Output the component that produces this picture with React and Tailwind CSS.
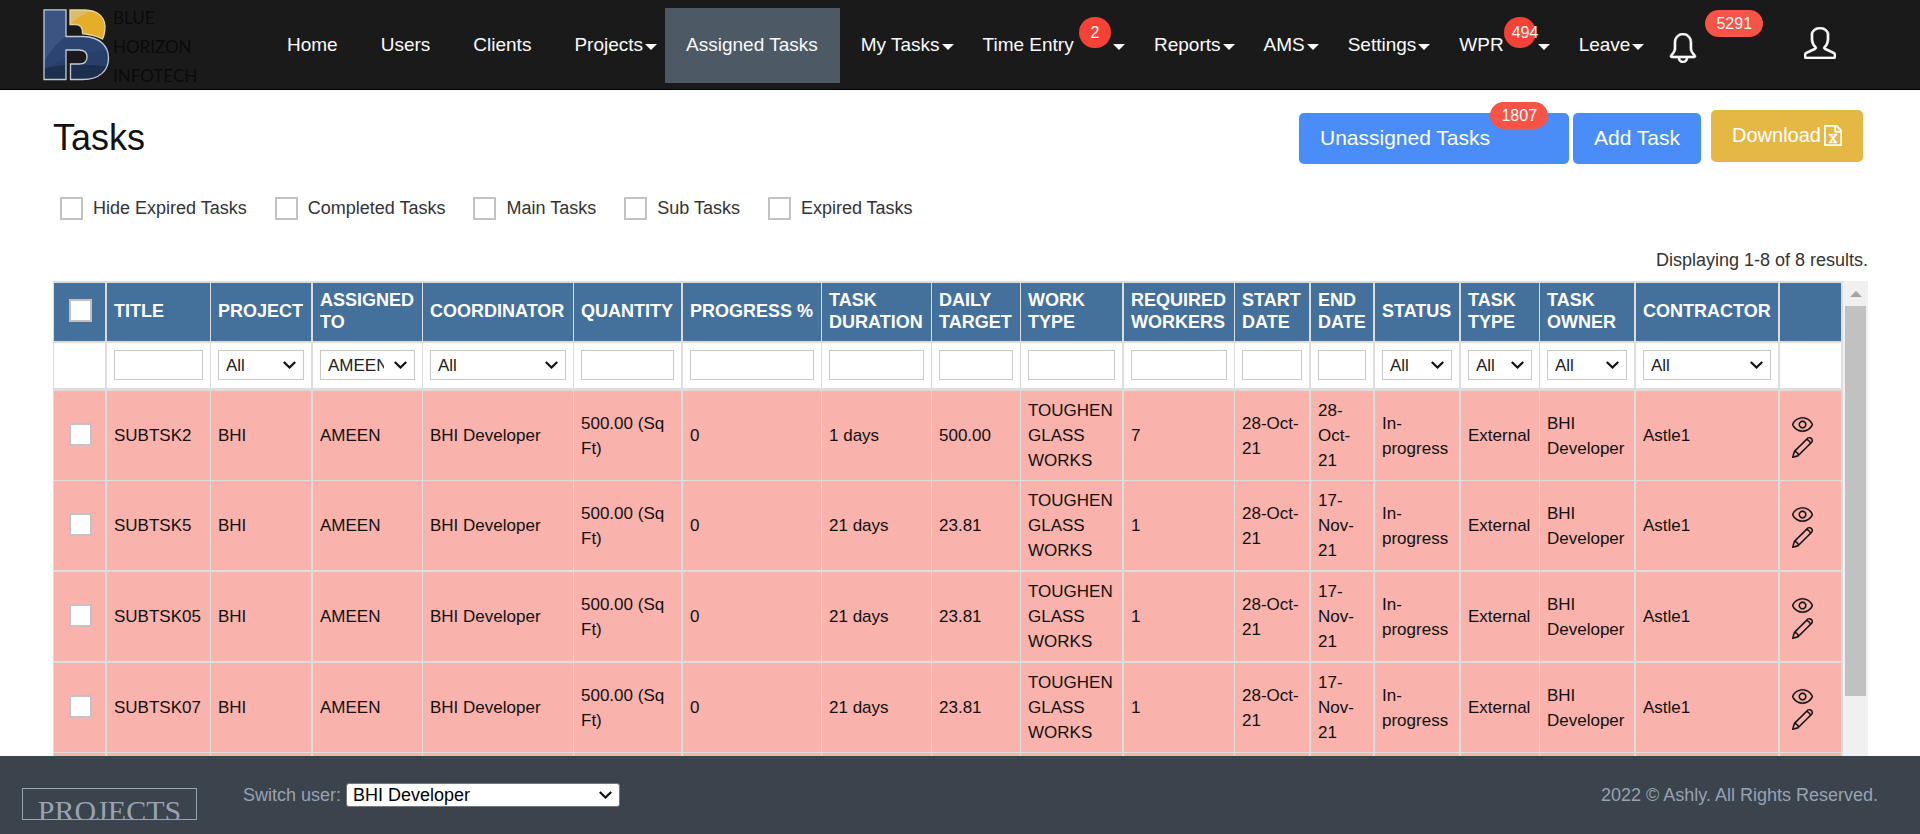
import React from "react";
import { SlBell, SlUser, SlEye, SlPencil } from "react-icons/sl";

const NAV = [
  { label: "Home" },
  { label: "Users" },
  { label: "Clients" },
  { label: "Projects", menu: true },
  { label: "Assigned Tasks", active: true },
  { label: "My Tasks", menu: true },
  { label: "Time Entry\u00a0", menu: true, count: "2" },
  { label: "Reports", menu: true },
  { label: "AMS", menu: true },
  { label: "Settings", menu: true },
  { label: "WPR", menu: true, count: "494" },
  { label: "Leave", menu: true },
];

const FILTERS = ["Hide Expired Tasks", "Completed Tasks", "Main Tasks", "Sub Tasks", "Expired Tasks"];

const COLUMNS = [
  { key: "title", label: "TITLE", col: "w-[104px]", edge: "border-r", filter: "text" },
  { key: "project", label: "PROJECT", col: "w-[102px]", edge: "border-r-2", filter: "All" },
  { key: "assigned", label: "ASSIGNED TO", col: "w-[110px]", edge: "border-r", filter: "AMEEN" },
  { key: "coordinator", label: "COORDINATOR", col: "w-[151px]", edge: "border-r", filter: "All" },
  { key: "quantity", label: "QUANTITY", col: "w-[109px]", edge: "border-r-2", filter: "text" },
  { key: "progress", label: "PROGRESS %", col: "w-[139px]", edge: "border-r", filter: "text" },
  { key: "duration", label: "TASK DURATION", col: "w-[110px]", edge: "border-r", filter: "text" },
  { key: "target", label: "DAILY TARGET", col: "w-[89px]", edge: "border-r", filter: "text" },
  { key: "work", label: "WORK TYPE", col: "w-[103px]", edge: "border-r-2", filter: "text" },
  { key: "workers", label: "REQUIRED WORKERS", col: "w-[111px]", edge: "border-r", filter: "text" },
  { key: "start", label: "START DATE", col: "w-[76px]", edge: "border-r-2", filter: "text" },
  { key: "end", label: "END DATE", col: "w-[64px]", edge: "border-r-2", filter: "text" },
  { key: "status", label: "STATUS", col: "w-[86px]", edge: "border-r-2", filter: "All" },
  { key: "type", label: "TASK TYPE", col: "w-[79px]", edge: "border-r", filter: "All" },
  { key: "owner", label: "TASK OWNER", col: "w-[96px]", edge: "border-r-2", filter: "All" },
  { key: "contractor", label: "CONTRACTOR", col: "w-[144px]", edge: "border-r-2", filter: "All" },
];

const common = {
  project: "BHI",
  assigned: "AMEEN",
  coordinator: "BHI Developer",
  quantity: "500.00 (Sq Ft)",
  progress: "0",
  work: "TOUGHEN GLASS WORKS",
  start: "28-Oct-21",
  status: "In-progress",
  type: "External",
  owner: "BHI Developer",
  contractor: "Astle1",
};
const later = { ...common, duration: "21 days", target: "23.81", workers: "1", end: "17-Nov-21" };

const ROWS = [
  { ...common, title: "SUBTSK2", duration: "1 days", target: "500.00", workers: "7", end: "28-Oct-21", rule: "border-b" },
  { ...later, title: "SUBTSK5", rule: "border-b-2" },
  { ...later, title: "SUBTSK05", rule: "border-b-2" },
  { ...later, title: "SUBTSK07", rule: "border-b" },
];

function Logo() {
  return (
    <a href="#home" aria-label="Blue Horizon Infotech" className="flex w-[223px] shrink-0 items-start gap-[3px] pt-px">
      <svg viewBox="0 0 67 72" className="h-[72px] w-[67px] shrink-0">
        <defs>
          <clipPath id="mark">
            <path d="M1 .8H23V27.5H40C57 28 65.500 37 65.500 49C65.500 62 56 70.500 40 70.500H27.500V55H36C41.500 55 44 52.500 44 48C44 43.500 41.500 41 36 41H23V70.500H1Z" />
          </clipPath>
          <clipPath id="sun">
            <path d="M27 1H42C54 1.500 61.500 7 62 17C62 22 61.500 26 59.500 30C54 27 48 25.500 39.500 24.500C40 19 37 15.500 33 15.500H27Z" />
          </clipPath>
        </defs>
        <g clipPath="url(#mark)">
          <rect width="67" height="72" fill="#3b5482" />
          <path d="M0 54Q10 36 26 25L67 26V72H0Z" fill="#2c4471" />
          <path d="M0 61Q30 42 67 42V72H0Z" fill="#27406a" />
          <path d="M0 60Q25 52 67 58V72H0Z" fill="#1c2f4e" />
        </g>
        <g clipPath="url(#sun)">
          <rect width="67" height="40" fill="#e4ae28" />
          <path d="M26 0H56Q42 3 31 12L26 16Z" fill="#debb6b" />
        </g>
        <g fill="none" stroke="#c3cbd6" strokeWidth="1.300">
          <path d="M1 .8H23V27.500H40C57 28 65.500 37 65.500 49C65.500 62 56 70.500 40 70.500H27.500V55H36C41.500 55 44 52.500 44 48C44 43.500 41.500 41 36 41H23V70.500H1Z" />
          <path stroke="#e8d49c" d="M27 1H42C54 1.500 61.500 7 62 17C62 22 61.500 26 59.500 30C54 27 48 25.500 39.500 24.500C40 19 37 15.500 33 15.500H27Z" />
        </g>
      </svg>
      <span className="-mt-[6px] flex flex-col font-[Lato,sans-serif] text-[17px] leading-[29px] text-[#0a0a0a]">
        <span>BLUE</span>
        <span>HORIZON</span>
        <span>INFOTECH</span>
      </span>
    </a>
  );
}

function NavItem({ item }) {
  const pad = item.menu ? "pr-2" : "pr-[22px]";
  const bg = item.active ? "bg-[#4d5965]" : "";
  return (
    <a href="#nav" className={`flex h-[75px] items-center whitespace-nowrap pl-[21px] text-[19px] text-[#fafafa] ${pad} ${bg}`}>
      {item.label}
      {item.count && (
        <span className="mt-[9px] block h-[31px] w-8 self-start rounded-full bg-[#f44336] px-2 text-center text-[16px] leading-[31px]">
          {item.count}
        </span>
      )}
      {item.menu && <span className="ml-[2px] mt-[3px] border-x-[6px] border-t-[6px] border-x-transparent border-t-[#fafafa]" />}
    </a>
  );
}

function Check({ label, id }) {
  return (
    <input
      id={id}
      type="checkbox"
      aria-label={label}
      className="block size-[23px] shrink-0 appearance-none border-2 border-[#c2c2c2] bg-white"
    />
  );
}

function Filter({ column }) {
  if (column.filter === "text") {
    return <input type="text" aria-label={column.label} className="block h-[30px] w-full border border-[#c8c8c8] bg-white px-1 text-[17px]" />;
  }
  return (
    <div className="relative">
      <select
        aria-label={column.label}
        className="block h-[30px] w-full appearance-none overflow-hidden border border-[#c8c8c8] bg-white pl-[7px] pr-[30px] text-[17px] text-[#222]"
      >
        <option>{column.filter}</option>
      </select>
      <Chevron />
    </div>
  );
}

function Chevron() {
  return (
    <svg viewBox="0 0 13 8" className="pointer-events-none absolute inset-y-0 right-2 my-auto h-2 w-[13px]">
      <path d="M.8 1L6.500 6.500L12.200 1" fill="none" stroke="#111" strokeWidth="2.200" />
    </svg>
  );
}

export default function App() {
  return (
    <div className="flex h-screen flex-col overflow-hidden bg-white font-['Liberation_Sans',Arial,sans-serif] text-[#222]">
      <header className="flex h-[90px] shrink-0 items-start border-b border-black bg-[#1a1a1a] pl-[43px] pt-2">
        <Logo />
        <nav className="flex">
          {NAV.map((item) => (
            <NavItem key={item.label} item={item} />
          ))}
        </nav>
        <button type="button" aria-label="Notifications" className="ml-4 flex items-start text-[#fafafa]">
          <SlBell strokeWidth={22} className="mt-[25px] size-[30px]" />
          <span className="ml-[7px] mt-[2px] rounded-full bg-[#f55447] px-[11px] text-[16px] leading-[27px]">5291</span>
        </button>
        <button type="button" aria-label="Account" className="ml-auto mr-[84px] mt-[19px] text-[#fafafa]">
          <SlUser strokeWidth={22} className="size-8" />
        </button>
      </header>

      <main className="flex min-h-0 flex-1 flex-col pl-[53px] pr-[52px] pt-[20px]">
        <div className="flex shrink-0 items-start justify-between">
          <h1 className="text-[36px] leading-[55px] text-[#111]">Tasks</h1>
          <div className="mr-[5px] flex items-start text-white">
            <button type="button" className="relative mt-[3px] h-[51px] rounded-[5px] bg-[#4b8df8] pb-[2px] pl-[21px] pr-[79px] text-[21px]">
              Unassigned Tasks
              <span className="absolute -top-[11px] right-[21px] rounded-full bg-[#f55447] px-[11px] text-[16px] leading-[27px]">1807</span>
            </button>
            <button type="button" className="ml-1 mt-[3px] h-[51px] rounded-[5px] bg-[#4b8df8] px-[21px] pb-[2px] text-[21px]">
              Add Task
            </button>
            <button type="button" className="ml-[10px] flex h-[52px] items-center gap-[3px] rounded-[5px] bg-[#e5b745] px-[21px] pb-[2px] text-[20px]">
              Download
              <svg viewBox="0 0 1536 1792" className="h-[21px] w-[18px]" fill="currentColor" stroke="currentColor" strokeWidth="40">
                <path d="M1468 380q28 28 48 76t20 88v1152q0 40-28 68t-68 28h-1344q-40 0-68-28t-28-68v-1600q0-40 28-68t68-28h896q40 0 88 20t76 48zM1024 136v376h376q-10-29-22-41l-313-313q-12-12-41-22zM1408 1664v-1024h-416q-40 0-68-28t-28-68v-416h-768v1536h1280zM429 1429v107h281v-107h-75l103-161q5-7 10-16.5t7.500-13.500 3.500-4h2q1 4 5 10 2 4 4.500 7.500t6 8 6.500 8.500l107 161h-76v107h291v-107h-68l-192-273 195-282h67v-107h-279v107h74l-103 159q-4 7-10 16.500t-9 13.500l-2 3h-2q-1-4-5-10-6-11-17-23l-106-159h76v-107h-290v107h68l189 272-194 283h-68z" />
              </svg>
            </button>
          </div>
        </div>

        <div className="mt-8 flex shrink-0 gap-7 pl-[7px]">
          {FILTERS.map((name, i) => (
            <label key={name} htmlFor={`filter-${i}`} className="flex items-center gap-[10px] text-[18px] leading-[23px] text-[#333]">
              <Check id={`filter-${i}`} label={name} />
              {name}
            </label>
          ))}
        </div>

        <p className="mb-[9px] mt-7 shrink-0 text-right text-[18px] leading-6 text-[#333]">Displaying 1-8 of 8 results.</p>

        <div className="flex min-h-0 flex-1 overflow-hidden">
          <div className="min-w-0 flex-1">
            <table className="w-full table-fixed border-separate border-spacing-0 text-left text-[17px] leading-[25px] text-[#111]">
              <colgroup>
                <col className="w-[54px]" />
                {COLUMNS.map((c) => (
                  <col key={c.key} className={c.col} />
                ))}
                <col className="w-[63px]" />
              </colgroup>
              <thead>
                <tr className="bg-[#44709c] text-[18px] leading-[22px] text-white">
                  <th className="border-y-2 border-l border-r-2 border-[#ddd] pb-[3px] pl-px">
                    <div className="flex justify-center">
                      <Check label="Select all tasks" />
                    </div>
                  </th>
                  {COLUMNS.map((c) => (
                    <th key={c.key} className={`border-y-2 border-[#ddd] px-[7px] pb-2 pt-[6px] font-bold ${c.edge}`}>
                      {c.label}
                    </th>
                  ))}
                  <th aria-label="Actions" className="border-y-2 border-r-2 border-[#ddd]" />
                </tr>
                <tr>
                  <td className="border-b-[3px] border-l border-r-2 border-[#ddd]" />
                  {COLUMNS.map((c) => (
                    <td key={c.key} className={`border-b-[3px] border-[#ddd] px-[7px] pb-2 pt-[7px] ${c.edge}`}>
                      <Filter column={c} />
                    </td>
                  ))}
                  <td className="border-b-[3px] border-r-2 border-[#ddd]" />
                </tr>
              </thead>
              <tbody>
                {ROWS.map((row) => (
                  <tr key={row.title} className="bg-[#f9b2ac]">
                    <td className={`border-l border-r-2 border-[#ddd] pb-[3px] pl-px ${row.rule}`}>
                      <div className="flex justify-center">
                        <Check label={`Select ${row.title}`} />
                      </div>
                    </td>
                    {COLUMNS.map((c) => (
                      <td key={c.key} className={`border-[#ddd] px-[7px] py-[7px] ${c.edge} ${row.rule}`}>
                        {row[c.key]}
                      </td>
                    ))}
                    <td className={`border-r-2 border-[#ddd] pl-3 ${row.rule}`}>
                      <div className="flex flex-col items-start">
                        <a href="#view" aria-label={`View ${row.title}`}>
                          <SlEye strokeWidth={12} className="size-[21px]" />
                        </a>
                        <a href="#edit" aria-label={`Edit ${row.title}`} className="mt-[2px]">
                          <SlPencil strokeWidth={12} className="size-[21px]" />
                        </a>
                      </div>
                    </td>
                  </tr>
                ))}
                <tr className="h-[90px] bg-[#f9b2ac]">
                  <td className="border-b border-l border-r-2 border-[#ddd]" />
                  {COLUMNS.map((c) => (
                    <td key={c.key} className={`border-b border-[#ddd] ${c.edge}`} />
                  ))}
                  <td className="border-b border-r-2 border-[#ddd]" />
                </tr>
              </tbody>
            </table>
          </div>
          <div aria-hidden="true" className="flex w-[25px] shrink-0 flex-col items-center bg-[#f0f0f0]">
            <span className="mb-[9px] mt-[10px] border-x-[6px] border-b-[6px] border-x-transparent border-b-[#a3a3a3]" />
            <span className="h-[390px] w-[21px] bg-[#c1c1c1]" />
          </div>
        </div>
      </main>

      <footer className="flex h-[78px] shrink-0 items-start bg-[#3b434c] pl-[22px] pr-[42px] text-[18px] leading-6 text-[#98a2b2]">
        <div className="mt-8 h-8 w-[175px] overflow-hidden border border-[#98a2b2] pt-[5px] text-center font-['Liberation_Serif',serif] text-[30px] leading-[34px]">
          PROJECTS
        </div>
        <label htmlFor="switch-user" className="ml-[46px] mt-[27px]">
          Switch user:
        </label>
        <div className="relative ml-[5px] mt-[27px] w-[274px]">
          <select id="switch-user" className="block h-6 w-full appearance-none rounded-[3px] border border-[#767676] bg-white pl-[6px] pr-6 text-[18px] leading-[22px] text-black">
            <option>BHI Developer</option>
          </select>
          <Chevron />
        </div>
        <p className="ml-auto mt-[27px]">2022 © Ashly. All Rights Reserved.</p>
      </footer>
    </div>
  );
}
